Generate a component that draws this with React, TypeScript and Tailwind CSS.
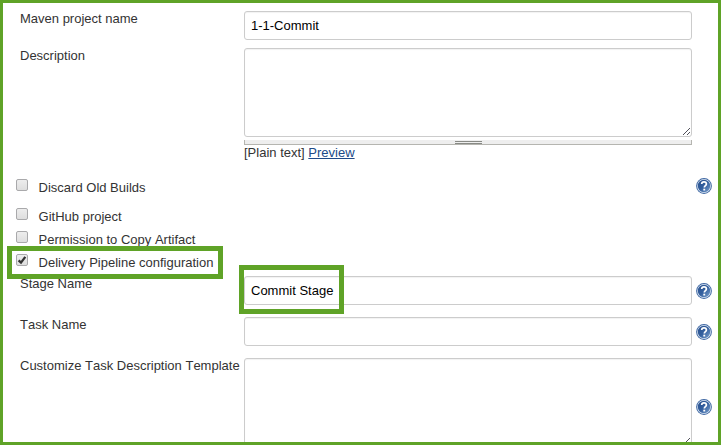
import type { ReactNode } from "react";

const fieldClass =
  "block w-[448px] shrink-0 rounded-[3px] border border-[#cccccc] bg-white shadow-[inset_0_1px_1px_rgba(0,0,0,0.055)]";

function HelpIcon({ className = "" }: { className?: string }) {
  return (
    <svg className={"block h-4 w-4 shrink-0 " + className} viewBox="0 0 16 16" role="img" aria-label="Help">
      <defs>
        <linearGradient id="helpDisc" x1="0" y1="0" x2="1" y2="1">
          <stop offset="0" stopColor="#284f8c" />
          <stop offset="0.5" stopColor="#34609f" />
          <stop offset="1" stopColor="#7ba0cd" />
        </linearGradient>
      </defs>
      <circle cx="8" cy="8" r="7.9" fill="#3f68a3" />
      <circle cx="8" cy="8" r="6.9" fill="#dfe8f3" />
      <circle cx="8" cy="8" r="6.2" fill="url(#helpDisc)" />
      <path
        d="M5.7 6C5.7 4.6 6.6 3.9 8 3.9s2.4.8 2.4 2.1c0 1.6-2.1 1.7-2.1 3.5"
        fill="none"
        stroke="#fff"
        strokeWidth="1.7"
      />
      <rect x="7.3" y="10.7" width="1.9" height="1.8" fill="#fff" />
    </svg>
  );
}

function TextInput({ value, label }: { value: string; label: string }) {
  return (
    <input
      readOnly
      aria-label={label}
      value={value}
      className={fieldClass + " h-[29px] px-[6px] text-[13px] text-black outline-none"}
    />
  );
}

function TextBox({ label }: { label: string }) {
  return (
    <div role="textbox" aria-label={label} className={fieldClass + " flex h-[89px] items-end justify-end"}>
      <svg className="mr-px mb-px block h-[7px] w-[7px]" viewBox="0 0 7 7" shapeRendering="crispEdges">
        <path
          d="M0 6h1v1H0zM1 5h1v1H1zM2 4h1v1H2zM3 3h1v1H3zM4 2h1v1H4zM5 1h1v1H5zM6 0h1v1H6zM4 6h1v1H4zM5 5h1v1H5zM6 4h1v1H6z"
          fill="#50505a"
        />
      </svg>
    </div>
  );
}

function Field({ label, children, help }: { label: string; children: ReactNode; help?: string }) {
  return (
    <div className="flex items-start pl-[17px]">
      <div className="w-[224px] shrink-0 whitespace-nowrap">{label}</div>
      {children}
      {help && <HelpIcon className={help} />}
    </div>
  );
}

function Option({
  label,
  checked = false,
  tall = false,
  help = false,
}: {
  label: string;
  checked?: boolean;
  tall?: boolean;
  help?: boolean;
}) {
  return (
    <div className={"flex items-start pl-[13px] " + (tall ? "h-[29px]" : "h-[23px]")}>
      <span
        role="checkbox"
        aria-checked={checked}
        aria-label={label}
        className="mt-px flex h-3 w-3 shrink-0 items-center justify-center rounded-[2px] border border-[#a9a9ab] bg-linear-to-b from-[#ededed] to-[#dedede]"
      >
        {checked && (
          <svg className="h-[10px] w-[10px] shrink-0" viewBox="0 0 10 10">
            <path d="M1.6 5.3 4 7.6 8.3 1.9" fill="none" stroke="#333" strokeWidth="2.3" />
          </svg>
        )}
      </span>
      <span className="mt-[2px] ml-[10.6px] grow">{label}</span>
      {help && <HelpIcon className="mr-[6px]" />}
    </div>
  );
}

export default function App() {
  return (
    <main className="relative h-[445px] w-[721px] overflow-hidden border-[3px] border-[#5fa327] bg-white font-['Liberation_Sans',Arial,sans-serif] text-[13px] leading-4 text-[#333333] [font-kerning:none]">
      <div className="flex flex-col gap-2 pt-2">
        <Field label="Maven project name">
          <TextInput label="Maven project name" value="1-1-Commit" />
        </Field>
        <Field label="Description">
          <div>
            <TextBox label="Description" />
            <div className="mt-[3px] flex h-[5px] justify-center border-x border-b border-[#b5b5b0] bg-[#eeeeee] pt-px">
              <div className="h-[3px] w-[27px] border-y border-[#888a85]" />
            </div>
            <div>
              [Plain text]{" "}
              <a href="#preview" className="text-[#204a87] underline">
                Preview
              </a>
            </div>
          </div>
        </Field>
      </div>

      <div className="pt-[17px]">
        <Option label="Discard Old Builds" tall help />
        <Option label="GitHub project" />
        <Option label="Permission to Copy Artifact" />
        <Option label="Delivery Pipeline configuration" checked />
      </div>

      <div className="flex flex-col gap-3">
        <Field label="Stage Name" help="ml-1 mt-[7px]">
          <TextInput label="Stage Name" value="Commit Stage" />
        </Field>
        <Field label="Task Name" help="ml-1 mt-[7px]">
          <TextInput label="Task Name" value="" />
        </Field>
        <Field label="Customize Task Description Template" help="ml-1 mt-[41px]">
          <TextBox label="Customize Task Description Template" />
        </Field>
      </div>

      <div className="pointer-events-none absolute top-[243px] left-[4px] h-[33px] w-[216px] border-[5px] border-[#5fa327]" />
      <div className="pointer-events-none absolute top-[262px] left-[236px] h-[49px] w-[105px] border-[5px] border-[#5fa327]" />
    </main>
  );
}
